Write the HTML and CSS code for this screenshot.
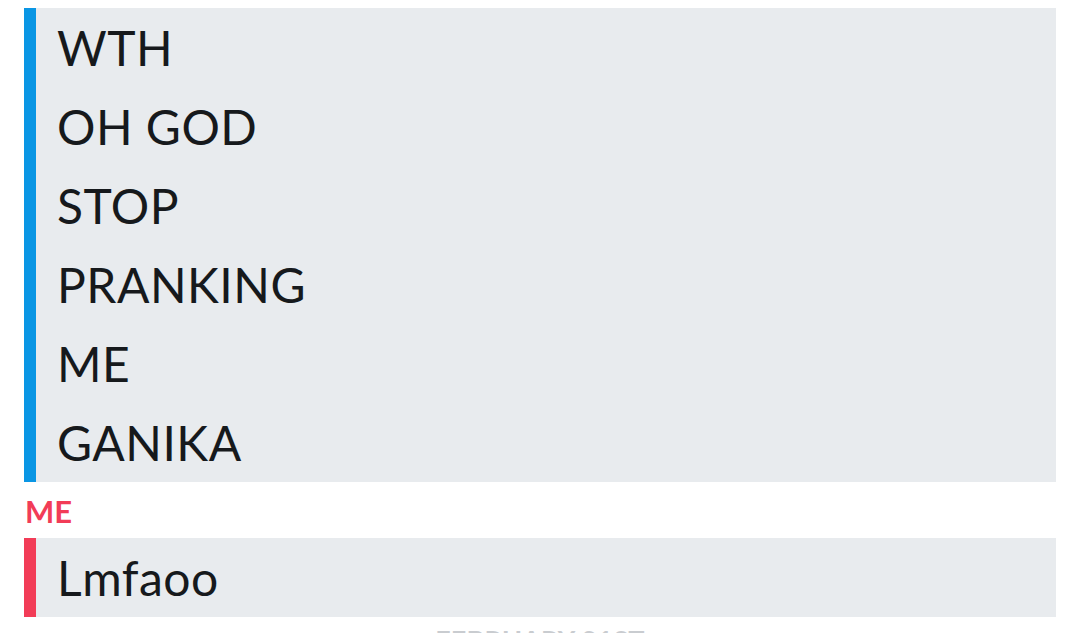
FILE: index.html
```html
<!DOCTYPE html>
<html lang="en">
<head>
    <meta charset="UTF-8">
    <meta name="viewport" content="width=device-width, initial-scale=1.0">
    <title>Chat</title>
    <link rel="stylesheet" href="styles.css">
</head>
<body>
    <div class="chat">
        <!-- Their messages -->
        <div class="msg-group them">
            <div class="bar"></div>
            <div class="lines">
                <p>WTH</p>
                <p>OH GOD</p>
                <p>STOP</p>
                <p>PRANKING</p>
                <p>ME</p>
                <p>GANIKA</p>
            </div>
        </div>

        <div class="sender me">ME</div>

        <!-- My messages -->
        <div class="msg-group mine">
            <div class="bar"></div>
            <div class="lines">
                <p>Lmfaoo</p>
            </div>
        </div>

        <div class="date">FEBRUARY 21ST</div>
    </div>
</body>
</html>
```

FILE: styles.css
```css
body {
    margin: 0;
    background-color: #ffffff;
    font-family: Lato, "Open Sans", sans-serif;
    color: #16191c;
    overflow: hidden;
}

.chat {
    padding: 8px 24px 0 24px;
    display: flex;
    flex-direction: column;
}

.msg-group {
    display: flex;
    background-color: #e8ebee;
}

.bar {
    width: 12px;
    flex-shrink: 0;
}

.them .bar {
    background-color: #0a96e4;
}

.mine .bar {
    background-color: #f23c57;
}

.lines {
    padding-left: 21px;
}

.lines p {
    margin: 0;
    font-size: 48px;
    letter-spacing: 0.5px;
    line-height: 79px;
    height: 79px;
}

.sender {
    height: 56px;
    line-height: 58px;
    font-size: 31px;
    font-weight: bold;
    padding-left: 1px;
}

.sender.me {
    color: #f23c57;
}

.date {
    margin-top: 6px;
    text-align: center;
    font-size: 27px;
    font-weight: bold;
    letter-spacing: 0.3px;
    color: #c9ccd0;
}
```
